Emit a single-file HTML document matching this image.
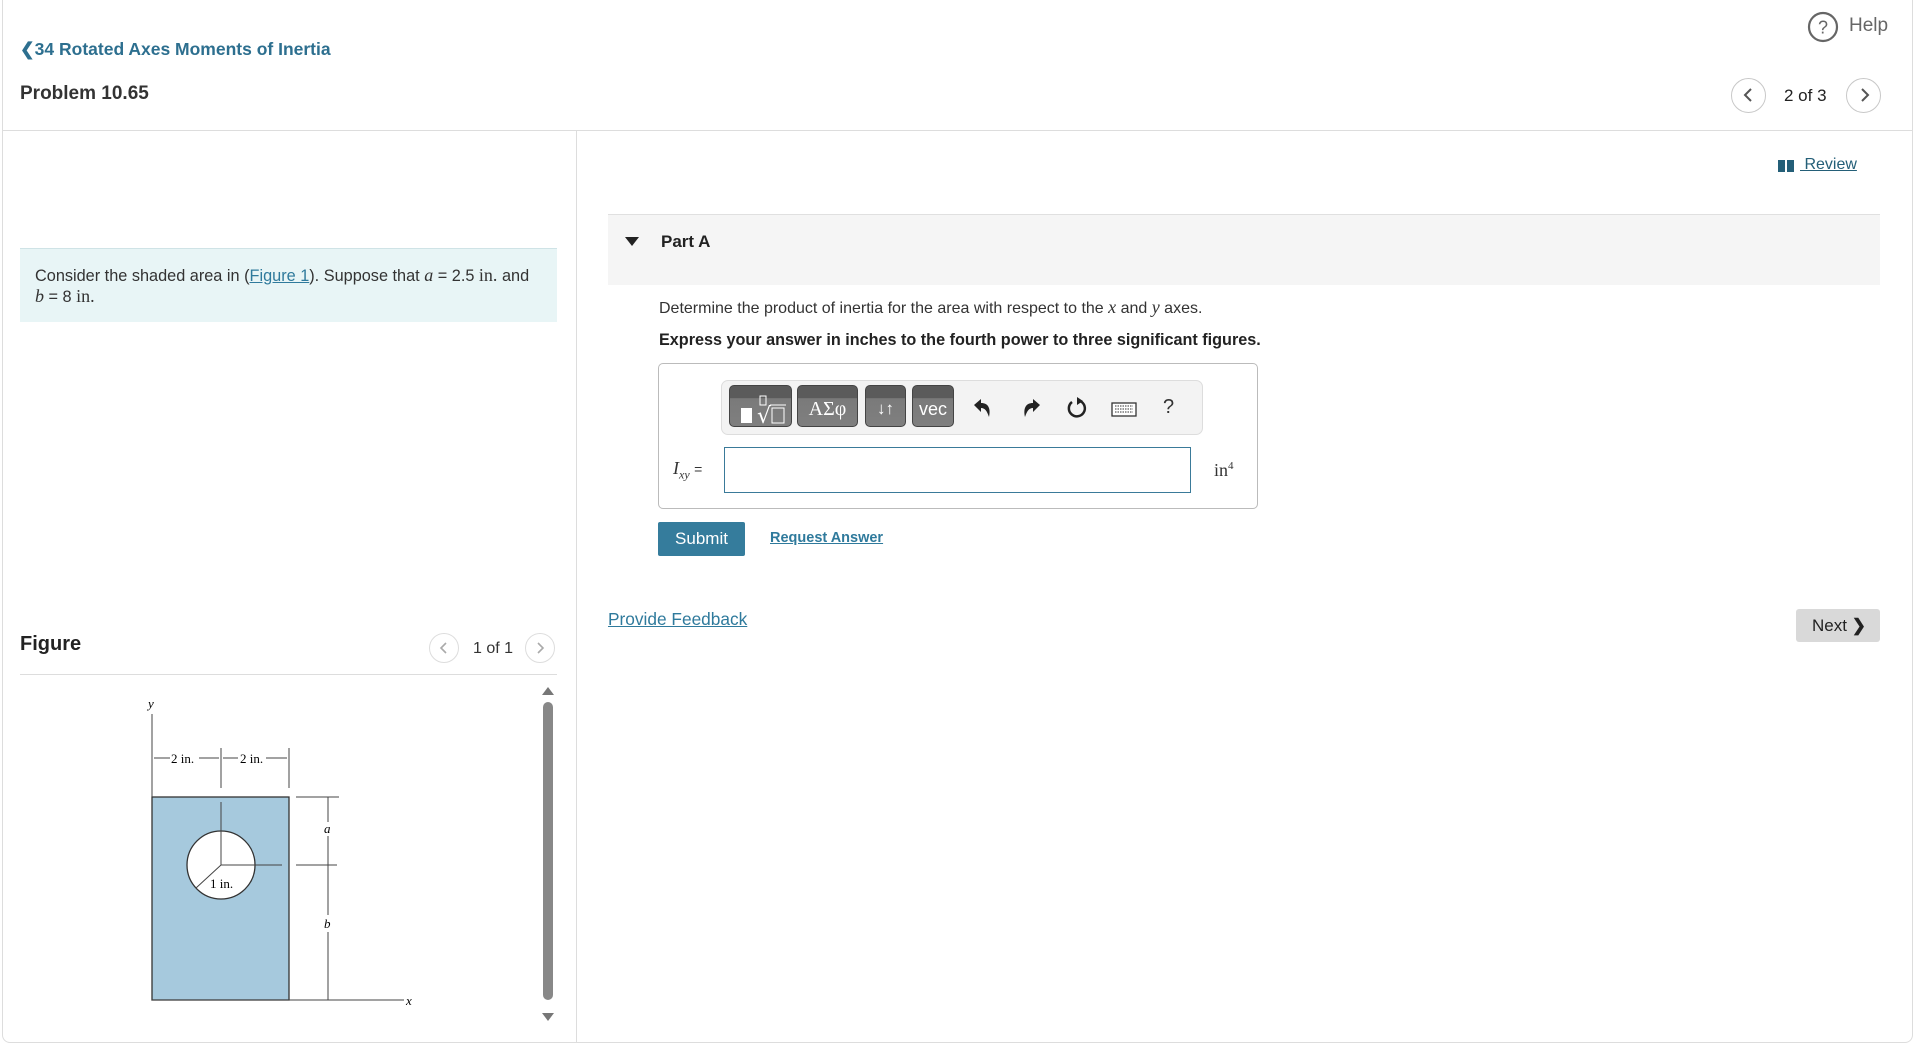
<!DOCTYPE html>
<html><head><meta charset="utf-8"><style>
*{box-sizing:border-box;margin:0;padding:0}
body{width:1917px;height:1046px;background:#fff;font-family:"Liberation Sans",Arial,sans-serif;position:relative;overflow:hidden;color:#222}
.a{position:absolute;white-space:nowrap}
.card{position:absolute;left:2px;top:-10px;width:1911px;height:1053px;border:1px solid #ddd;border-radius:8px}
.circ{position:absolute;border:1px solid #c8c8c8;border-radius:50%;background:#fff}
.tb{position:absolute;top:385px;height:42px;border-radius:5px;background:linear-gradient(#5b5b5b 0,#5b5b5b 30%,#7a7a7a 31%,#7f7f7f 100%);border:1px solid #444;color:#fff;text-align:center;line-height:46px}
a{color:#2f7a9c}
.m{font-family:'Liberation Serif',serif;font-size:18px}
</style></head><body>
<div class="card"></div>
<svg class="a" style="left:1807px;top:11px" width="32" height="32" viewBox="0 0 32 32"><circle cx="16" cy="16" r="14" fill="none" stroke="#666" stroke-width="2.2"/><text x="16" y="22.5" font-size="18" text-anchor="middle" fill="#666" font-family="Liberation Sans">?</text></svg>
<div class="a" style="left:1849px;top:15px;font-size:19px;color:#666">Help</div>
<div class="a" style="left:20px;top:39px;font-size:17.5px;font-weight:bold;color:#2d6f8f">❮34 Rotated Axes Moments of Inertia</div>
<div class="a" style="left:20px;top:83px;font-size:19px;font-weight:bold;color:#333">Problem 10.65</div>
<div class="circ" style="left:1731px;top:78px;width:35px;height:35px"></div>
<svg class="a" style="left:1741px;top:87px" width="16" height="16"><path d="M10 2 L4 8 L10 14" fill="none" stroke="#555" stroke-width="2"/></svg>
<div class="a" style="left:1784px;top:86px;font-size:17px;color:#222">2 of 3</div>
<div class="circ" style="left:1846px;top:78px;width:35px;height:35px"></div>
<svg class="a" style="left:1856px;top:87px" width="16" height="16"><path d="M6 2 L12 8 L6 14" fill="none" stroke="#555" stroke-width="2"/></svg>
<div class="a" style="left:2px;top:130px;width:1911px;height:1px;background:#ddd"></div>
<div class="a" style="left:576px;top:131px;width:1px;height:912px;background:#ddd"></div>
<div class="a" style="left:20px;top:248px;width:537px;height:74px;background:#e8f5f6;border-top:1px solid #cfe3e6"></div>
<div class="a" style="left:35px;top:265px;font-size:16.3px;color:#333;line-height:20px">Consider the shaded area in (<a href="#" style="color:#2f7a9c">Figure 1</a>). Suppose that <i class="m">a</i> = 2.5 <span class="m">in.</span> and<br><i class="m">b</i> = 8 <span class="m">in.</span></div>
<div class="a" style="left:20px;top:633px;font-size:20px;font-weight:bold;color:#222">Figure</div>
<div class="circ" style="left:429px;top:633px;width:30px;height:30px;border-color:#ddd"></div>
<svg class="a" style="left:437px;top:641px" width="14" height="14"><path d="M9 2 L4 7 L9 12" fill="none" stroke="#aaa" stroke-width="1.6"/></svg>
<div class="a" style="left:473px;top:640px;font-size:16px;color:#333">1 of 1</div>
<div class="circ" style="left:525px;top:633px;width:30px;height:30px;border-color:#ddd"></div>
<svg class="a" style="left:533px;top:641px" width="14" height="14"><path d="M5 2 L10 7 L5 12" fill="none" stroke="#aaa" stroke-width="1.6"/></svg>
<div class="a" style="left:20px;top:674px;width:537px;height:1px;background:#ddd"></div>
<svg class="a" style="left:540px;top:683px" width="16" height="345"><path d="M2 12 L8 4 L14 12Z" fill="#777"/><rect x="3" y="19" width="10" height="298" rx="5" fill="#888"/><path d="M2 330 L8 338 L14 330Z" fill="#777"/></svg>
<svg class="a" style="left:0;top:0" width="576" height="1046" font-family="Liberation Serif" font-size="13">
<rect x="152" y="797" width="137" height="203" fill="#a6c9dd" stroke="#333" stroke-width="1.3"/>
<circle cx="221" cy="865" r="34" fill="#fff" stroke="#333" stroke-width="1.3"/>
<g stroke="#444" stroke-width="1" fill="none">
<path d="M152 714 V797 M152 1000 H404 M221 748 V788 M289 748 V788 M221 802 V865 H282 M296 797 H339 M296 865 H337 M328 797 V822 M328 836 V915 M328 932 V1000 M221 865 L196 888"/>
<path d="M154 758 H170 M199 758 H219 M223 758 H238 M266 758 H287"/>
</g>
<text x="148" y="708" font-style="italic">y</text>
<text x="171" y="763">2 in.</text><text x="240" y="763">2 in.</text>
<text x="210" y="888">1 in.</text>
<text x="324" y="833" font-style="italic">a</text>
<text x="324" y="928" font-style="italic">b</text>
<text x="406" y="1005" font-style="italic">x</text>
</svg>
<svg class="a" style="left:1778px;top:160px" width="16" height="12"><path d="M0 0 H7 V12 H0Z M9 0 H16 V12 H9Z" fill="#245f78"/></svg>
<div class="a" style="left:1800px;top:156px;font-size:16px;color:#245f78;text-decoration:underline">&nbsp;Review</div>
<div class="a" style="left:608px;top:214px;width:1272px;height:71px;background:#f5f5f5;border-top:1px solid #e0e0e0"></div>
<svg class="a" style="left:625px;top:237px" width="14" height="10"><path d="M0 0 H14 L7 9Z" fill="#222"/></svg>
<div class="a" style="left:661px;top:232px;font-size:17px;font-weight:bold;color:#222">Part A</div>
<div class="a" style="left:659px;top:297px;font-size:16px;color:#333">Determine the product of inertia for the area with respect to the <i class="m">x</i> and <i class="m">y</i> axes.</div>
<div class="a" style="left:659px;top:331px;font-size:16.2px;font-weight:bold;color:#222">Express your answer in inches to the fourth power to three significant figures.</div>
<div class="a" style="left:658px;top:363px;width:600px;height:146px;border:1px solid #bbb;border-radius:5px"></div>
<div class="a" style="left:721px;top:380px;width:482px;height:55px;background:#f3f3f3;border:1px solid #ddd;border-radius:7px"></div>
<div class="tb" style="left:729px;width:63px"><svg width="63" height="42" style="position:absolute;left:0;top:0"><rect x="11" y="22" width="11" height="15" fill="#fff"/><rect x="30" y="10" width="6" height="9" fill="none" stroke="#fff"/><text x="27" y="37" fill="#fff" font-size="22" font-family="DejaVu Sans">√</text><path d="M40 19 H56" stroke="#fff"/><rect x="42" y="22" width="12" height="15" fill="none" stroke="#fff"/></svg></div>
<div class="tb" style="left:797px;width:61px;font-family:'Liberation Serif',serif;font-size:20px">ΑΣφ</div>
<div class="tb" style="left:865px;width:41px;font-size:17px">↓↑</div>
<div class="tb" style="left:912px;width:42px;font-size:18px">vec</div>
<svg class="a" style="left:972px;top:397px" width="22" height="22" viewBox="0 0 22 22"><path d="M2 8 L9 2 V6 C16 6 19 11 17 20 C15 14 13 11 9 11 V15Z" fill="#222"/></svg>
<svg class="a" style="left:1020px;top:397px" width="22" height="22" viewBox="0 0 22 22"><path d="M20 8 L13 2 V6 C6 6 3 11 5 20 C7 14 9 11 13 11 V15Z" fill="#222"/></svg>
<svg class="a" style="left:1066px;top:396px" width="22" height="24" viewBox="0 0 22 24"><path d="M14 5 A8 8 0 1 1 6 6" fill="none" stroke="#222" stroke-width="2.5"/><path d="M11 1 L17 5 L11 9Z" fill="#222"/></svg>
<svg class="a" style="left:1111px;top:402px" width="26" height="15" viewBox="0 0 26 15"><rect x="1" y="1" width="24" height="13" fill="#fff" stroke="#333" stroke-width="1.3"/><path d="M4 4 H22 M4 7 H22 M4 10 H22" stroke="#333" stroke-dasharray="1.5 1"/></svg>
<div class="a" style="left:1163px;top:396px;font-size:20px;color:#333">?</div>
<div class="a" style="left:673px;top:458px;font-family:'Liberation Serif',serif;font-size:18px;color:#333"><i>I<sub style="font-size:12px">xy</sub></i> <span style="font-family:'Liberation Sans';font-size:14px">=</span></div>
<div class="a" style="left:724px;top:447px;width:467px;height:46px;border:1px solid #3a7a99"></div>
<div class="a" style="left:1214px;top:460px;font-family:'Liberation Serif',serif;font-size:18px;color:#333">in<sup style="font-size:11px">4</sup></div>
<div class="a" style="left:658px;top:522px;width:87px;height:34px;background:#357c9c;border-radius:2px;color:#fff;font-size:17px;text-align:center;line-height:34px">Submit</div>
<div class="a" style="left:770px;top:530px;font-size:14.5px;font-weight:bold;color:#2f7a9c;text-decoration:underline">Request Answer</div>
<div class="a" style="left:608px;top:609px;font-size:17.3px;color:#2f7a9c;text-decoration:underline">Provide Feedback</div>
<div class="a" style="left:1796px;top:609px;width:84px;height:33px;background:#d9d9d9;border-radius:3px;font-size:17px;color:#222;line-height:33px;padding-left:16px">Next <b>❯</b></div>
</body></html>
